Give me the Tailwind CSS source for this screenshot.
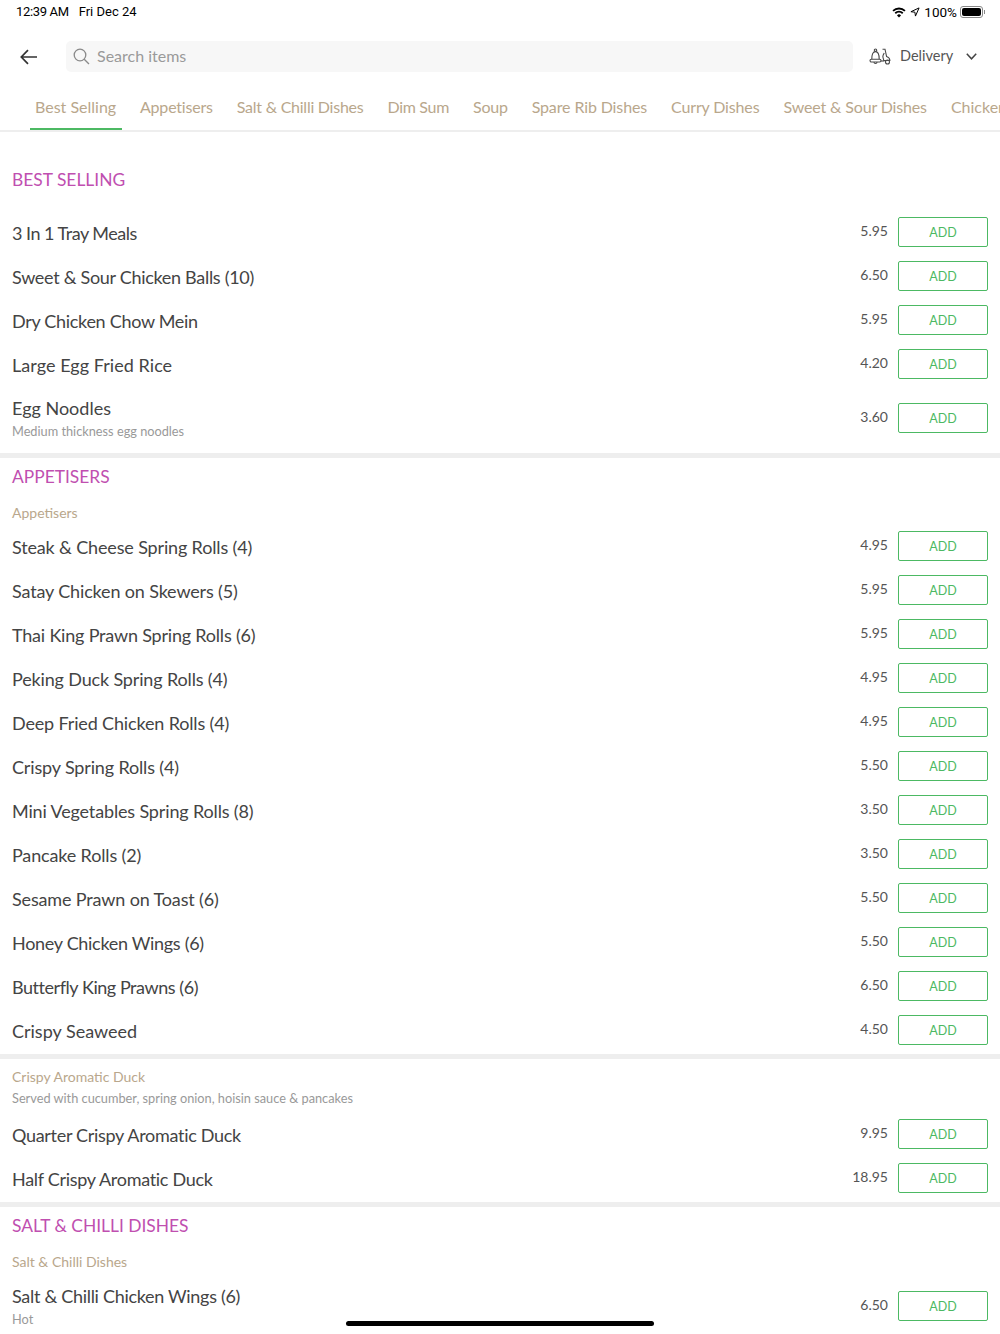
<!DOCTYPE html>
<html lang="en">
<head>
    <meta charset="UTF-8">
    <meta name="viewport" content="width=device-width, initial-scale=1.0">
    <title>Menu</title>
    <script src="https://cdn.jsdelivr.net/npm/@tailwindcss/browser@4"></script>
</head>
<body class="bg-white h-[1334px] overflow-hidden relative font-['Lato','Open_Sans',sans-serif] text-[#444444]">
    <!-- Status bar -->
    <div class="h-6 flex items-center justify-between pl-4 pr-[15px] text-[13px] text-black font-['Roboto',sans-serif]">
        <div class="flex gap-[10px]">
            <span class="tracking-[-0.35px]">12:39 AM</span>
            <span>Fri Dec 24</span>
        </div>
        <div class="flex items-center">
            <svg class="w-[14px] h-[11px] mr-[4px]" viewBox="0 0 15 12" fill="none" stroke="black" stroke-width="2">
                <path d="M1 4.2a9.5 9.5 0 0 1 13 0"></path>
                <path d="M3.4 6.8a6 6 0 0 1 8.2 0"></path>
                <path d="M7.5 11.500l-2.200-2.300a3 3 0 0 1 4.400 0z" fill="black" stroke="none"></path>
            </svg>
            <svg class="w-[10px] h-[10px] mr-[4px]" viewBox="0 0 11 11" fill="none" stroke="black" stroke-width="1.1" stroke-linejoin="round">
                <path d="M10 1L1 5.2l4.4.5L6 10z"></path>
            </svg>
            <span class="text-[13.5px]">100%</span>
            <div class="w-[23px] h-[12px] ml-[3px] border border-[#888888] rounded-[3px] p-[1px]">
                <div class="w-full h-full bg-black rounded-[2px]"></div>
            </div>
            <div class="w-[1px] h-[4px] ml-[1px] bg-[#888888]"></div>
        </div>
    </div>

    <!-- Search header -->
    <div class="flex items-center h-[31px] mt-[17px]">
        <div class="w-[66px] pl-[20px]">
            <svg class="w-[18px] h-[16px]" viewBox="0 0 18 16" fill="none" stroke="#333333" stroke-width="1.7">
                <path d="M17 8H1.5M8 1.2L1.3 8 8 14.8"></path>
            </svg>
        </div>
        <div class="w-[787px] h-[31px] bg-[#f7f7f7] rounded-[5px] flex items-center pl-[7px]">
            <svg class="w-[17px] h-[17px]" viewBox="0 0 17 17" fill="none" stroke="#8a8a8a" stroke-width="1.3">
                <circle cx="7" cy="7" r="5.8"></circle>
                <path d="M11.2 11.2L16 16"></path>
            </svg>
            <span class="ml-[7px] pb-[2px] text-[16px] text-[#9a9a9a]">Search items</span>
        </div>
        <div class="flex items-center ml-[16px]">
            <svg class="w-[22px] h-[17px]" viewBox="0 0 22 17" fill="none" stroke="#4a4a4a" stroke-width="1.100">
                <circle cx="6.500" cy="2.200" r="1.200"></circle>
                <path d="M2.800 11.200C2.800 6.500 3.800 3.600 6.500 3.600s3.700 2.900 3.700 7.600"></path>
                <rect x="1" y="11.200" width="11" height="2.800" rx="1.400"></rect>
                <path d="M5 14a1.500 1.500 0 0 0 3 0"></path>
                <path d="M12 13h3.500"></path>
                <path d="M13.500 1.200h2.500l1.600 7.300c1.900.6 3.200 2 3.300 4h-6.200c0-2-1.500-3.200-.6-5.300l1.100-2.200"></path>
                <circle cx="18.500" cy="14" r="2"></circle>
            </svg>
            <span class="ml-[9px] pb-[1px] text-[14.5px] text-[#555555]">Delivery</span>
            <svg class="w-[11px] h-[7px] ml-[13px]" viewBox="0 0 11 7" fill="none" stroke="#444444" stroke-width="1.500">
                <path d="M.8.8l4.700 5 4.700-5"></path>
            </svg>
        </div>
    </div>

    <!-- Category tabs -->
    <div class="mt-[16px] h-[44px] border-b-2 border-[#eeeeee] flex pl-[30px] gap-[14px] overflow-hidden whitespace-nowrap text-[16px] text-[#b9a78c]">
        <div class="shrink-0 w-[92px] -mr-px pl-[5px] h-[43px] pt-[7px] border-b-[3px] border-[#4cb963]">Best Selling</div>
        <div class="shrink-0 px-[5px] pt-[7px] tracking-[-0.2px]">Appetisers</div>
        <div class="shrink-0 px-[5px] pt-[7px] tracking-[-0.25px]">Salt &amp; Chilli Dishes</div>
        <div class="shrink-0 px-[5px] pt-[7px] tracking-[-0.3px]">Dim Sum</div>
        <div class="shrink-0 px-[5px] pt-[7px] tracking-[-0.25px]">Soup</div>
        <div class="shrink-0 px-[5px] pt-[7px] tracking-[-0.12px]">Spare Rib Dishes</div>
        <div class="shrink-0 px-[5px] pt-[7px] tracking-[-0.15px]">Curry Dishes</div>
        <div class="shrink-0 px-[5px] pt-[7px] tracking-[-0.15px]">Sweet &amp; Sour Dishes</div>
        <div class="shrink-0 px-[5px] pt-[7px]">Chicken Dishes</div>
    </div>

    <!-- Menu -->
    <div id="menu"></div>

    <!-- Home indicator -->
    <div class="absolute left-[346px] top-[1321px] w-[308px] h-[5px] rounded-full bg-black"></div>

    <script>
        const heading = (text, extra) => `<div class="px-3 text-[17.4px] leading-[24px] text-[#c04fb0] ${extra}">${text}</div>`;
        const sub = (text, extra) => `<div class="px-3 text-[14px] leading-[20px] text-[#b9a78c] ${extra}">${text}</div>`;
        const rule = `<div class="h-[5px] bg-[#eeeeee]"></div>`;

        function row(name, price, desc, tracking = 'tracking-[-0.15px]') {
            const note = desc ? `<div class="text-[12.75px] leading-[18px] mt-[2px] text-[#999999]">${desc}</div>` : '';
            return `<div class="flex items-center px-3 ${desc ? 'h-[64px]' : 'h-[44px]'}">
                <div class="flex-1 ${desc ? '' : 'pt-[2px]'}">
                    <div class="text-[18px] leading-[24px] ${tracking}">${name}</div>
                    ${note}
                </div>
                <div class="text-[14px] text-[#555555] mr-[10px] mb-[4px]">${price}</div>
                <button class="w-[90px] h-[30px] pt-[2px] border border-[#4cb963] rounded-[2px] text-[12.5px] text-[#4cb963]">ADD</button>
            </div>`;
        }

        const tight = 'tracking-[-0.3px]';

        document.getElementById('menu').innerHTML = [
            heading('BEST SELLING', 'pt-[36px] pb-[18px]'),
            row('3 In 1 Tray Meals', '5.95', '', 'tracking-[-0.5px]'),
            row('Sweet &amp; Sour Chicken Balls (10)', '6.50', '', tight),
            row('Dry Chicken Chow Mein', '5.95', '', tight),
            row('Large Egg Fried Rice', '4.20', '', 'tracking-[0.05px]'),
            row('Egg Noodles', '3.60', 'Medium thickness egg noodles', 'tracking-normal'),
            `<div class="h-[3px]"></div>`, rule,
            heading('APPETISERS', 'pt-[7px]'),
            sub('Appetisers', 'pt-[14px] pb-[1px]'),
            row('Steak &amp; Cheese Spring Rolls (4)', '4.95'),
            row('Satay Chicken on Skewers (5)', '5.95'),
            row('Thai King Prawn Spring Rolls (6)', '5.95', '', 'tracking-[-0.2px]'),
            row('Peking Duck Spring Rolls (4)', '4.95'),
            row('Deep Fried Chicken Rolls (4)', '4.95'),
            row('Crispy Spring Rolls (4)', '5.50'),
            row('Mini Vegetables Spring Rolls (8)', '3.50'),
            row('Pancake Rolls (2)', '3.50'),
            row('Sesame Prawn on Toast (6)', '5.50'),
            row('Honey Chicken Wings (6)', '5.50', '', tight),
            row('Butterfly King Prawns (6)', '6.50', '', 'tracking-[-0.45px]'),
            row('Crispy Seaweed', '4.50', '', 'tracking-normal'),
            `<div class="h-[2px]"></div>`, rule,
            sub('Crispy Aromatic Duck', 'pt-[8px]'),
            `<div class="px-3 text-[12.75px] leading-[18px] mt-[2px] mb-[5px] text-[#999999]">Served with cucumber, spring onion, hoisin sauce &amp; pancakes</div>`,
            row('Quarter Crispy Aromatic Duck', '9.95', '', tight),
            row('Half Crispy Aromatic Duck', '18.95', '', tight),
            `<div class="h-[2px]"></div>`, rule,
            heading('SALT &amp; CHILLI DISHES', 'pt-[7px]'),
            sub('Salt &amp; Chilli Dishes', 'pt-[14px] pb-[2px]'),
            row('Salt &amp; Chilli Chicken Wings (6)', '6.50', 'Hot', tight)
        ].join('');
    </script>
</body>
</html>
